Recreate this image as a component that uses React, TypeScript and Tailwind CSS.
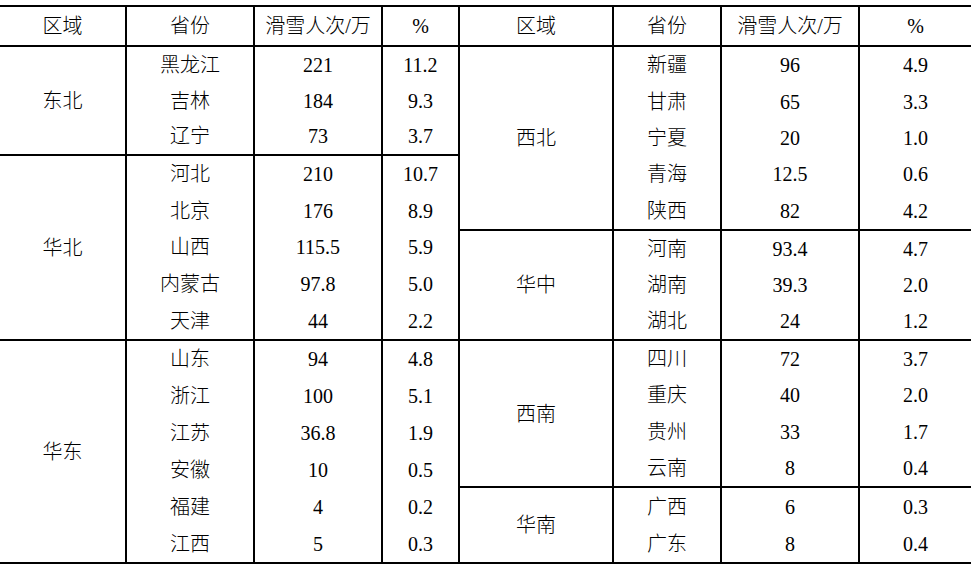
type Row = [string, string, string];
type Group = { region: string; h: string; rows: Row[] };

const left: Group[] = [
  {
    region: "东北",
    h: "h-[109px] border-b-2",
    rows: [
      ["黑龙江", "221", "11.2"],
      ["吉林", "184", "9.3"],
      ["辽宁", "73", "3.7"],
    ],
  },
  {
    region: "华北",
    h: "h-[185px] border-b-2",
    rows: [
      ["河北", "210", "10.7"],
      ["北京", "176", "8.9"],
      ["山西", "115.5", "5.9"],
      ["内蒙古", "97.8", "5.0"],
      ["天津", "44", "2.2"],
    ],
  },
  {
    region: "华东",
    h: "flex-1",
    rows: [
      ["山东", "94", "4.8"],
      ["浙江", "100", "5.1"],
      ["江苏", "36.8", "1.9"],
      ["安徽", "10", "0.5"],
      ["福建", "4", "0.2"],
      ["江西", "5", "0.3"],
    ],
  },
];

const right: Group[] = [
  {
    region: "西北",
    h: "h-[184px] border-b-2",
    rows: [
      ["新疆", "96", "4.9"],
      ["甘肃", "65", "3.3"],
      ["宁夏", "20", "1.0"],
      ["青海", "12.5", "0.6"],
      ["陕西", "82", "4.2"],
    ],
  },
  {
    region: "华中",
    h: "h-[110px] border-b-2",
    rows: [
      ["河南", "93.4", "4.7"],
      ["湖南", "39.3", "2.0"],
      ["湖北", "24", "1.2"],
    ],
  },
  {
    region: "西南",
    h: "h-[147px] border-b-2",
    rows: [
      ["四川", "72", "3.7"],
      ["重庆", "40", "2.0"],
      ["贵州", "33", "1.7"],
      ["云南", "8", "0.4"],
    ],
  },
  {
    region: "华南",
    h: "flex-1",
    rows: [
      ["广西", "6", "0.3"],
      ["广东", "8", "0.4"],
    ],
  },
];

// column widths (each includes its 2px right rule)
const colsLeft = ["w-[127px]", "w-[128px]", "w-[128px]"];
const colsRight = ["w-[154px]", "w-[108px]", "w-[138px]"];

function Half({ groups, cols }: { groups: Group[]; cols: string[] }) {
  return (
    <div className="flex flex-col h-full">
      {groups.map((g) => (
        <div key={g.region} className={`flex border-black ${g.h}`}>
          <div className={`${cols[0]} border-r-2 border-black flex items-center justify-center`}>
            {g.region}
          </div>
          <div className="flex-1 flex flex-col">
            {g.rows.map((r) => (
              <div key={r[0]} className="flex-1 flex">
                <div className={`${cols[1]} border-r-2 border-black flex items-center justify-center`}>
                  {r[0]}
                </div>
                <div className={`${cols[2]} border-r-2 border-black flex items-center justify-center`}>
                  {r[1]}
                </div>
                <div className="flex-1 flex items-center justify-center">{r[2]}</div>
              </div>
            ))}
          </div>
        </div>
      ))}
    </div>
  );
}

function HeaderHalf({ cols }: { cols: string[] }) {
  return (
    <div className="flex h-full">
      <div className={`${cols[0]} border-r-2 border-black flex items-center justify-center`}>区域</div>
      <div className={`${cols[1]} border-r-2 border-black flex items-center justify-center`}>省份</div>
      <div className={`${cols[2]} border-r-2 border-black flex items-center justify-center`}>滑雪人次/万</div>
      <div className="flex-1 flex items-center justify-center">%</div>
    </div>
  );
}

export default function App() {
  return (
    <div className="w-[980px] h-[572px] bg-white pt-[5px] text-black text-[20px] font-['Liberation_Serif','Noto_Sans_CJK_SC',serif] font-light">
      <div className="w-[971px] border-y-2 border-black">
        {/* header */}
        <div className="flex h-[40px] border-b-2 border-black">
          <div className="w-[460px] border-r-2 border-black">
            <HeaderHalf cols={colsLeft} />
          </div>
          <div className="flex-1">
            <HeaderHalf cols={colsRight} />
          </div>
        </div>

        {/* body */}
        <div className="flex h-[515px]">
          <div className="w-[460px] border-r-2 border-black">
            <Half groups={left} cols={colsLeft} />
          </div>
          <div className="flex-1">
            <Half groups={right} cols={colsRight} />
          </div>
        </div>
      </div>
    </div>
  );
}
